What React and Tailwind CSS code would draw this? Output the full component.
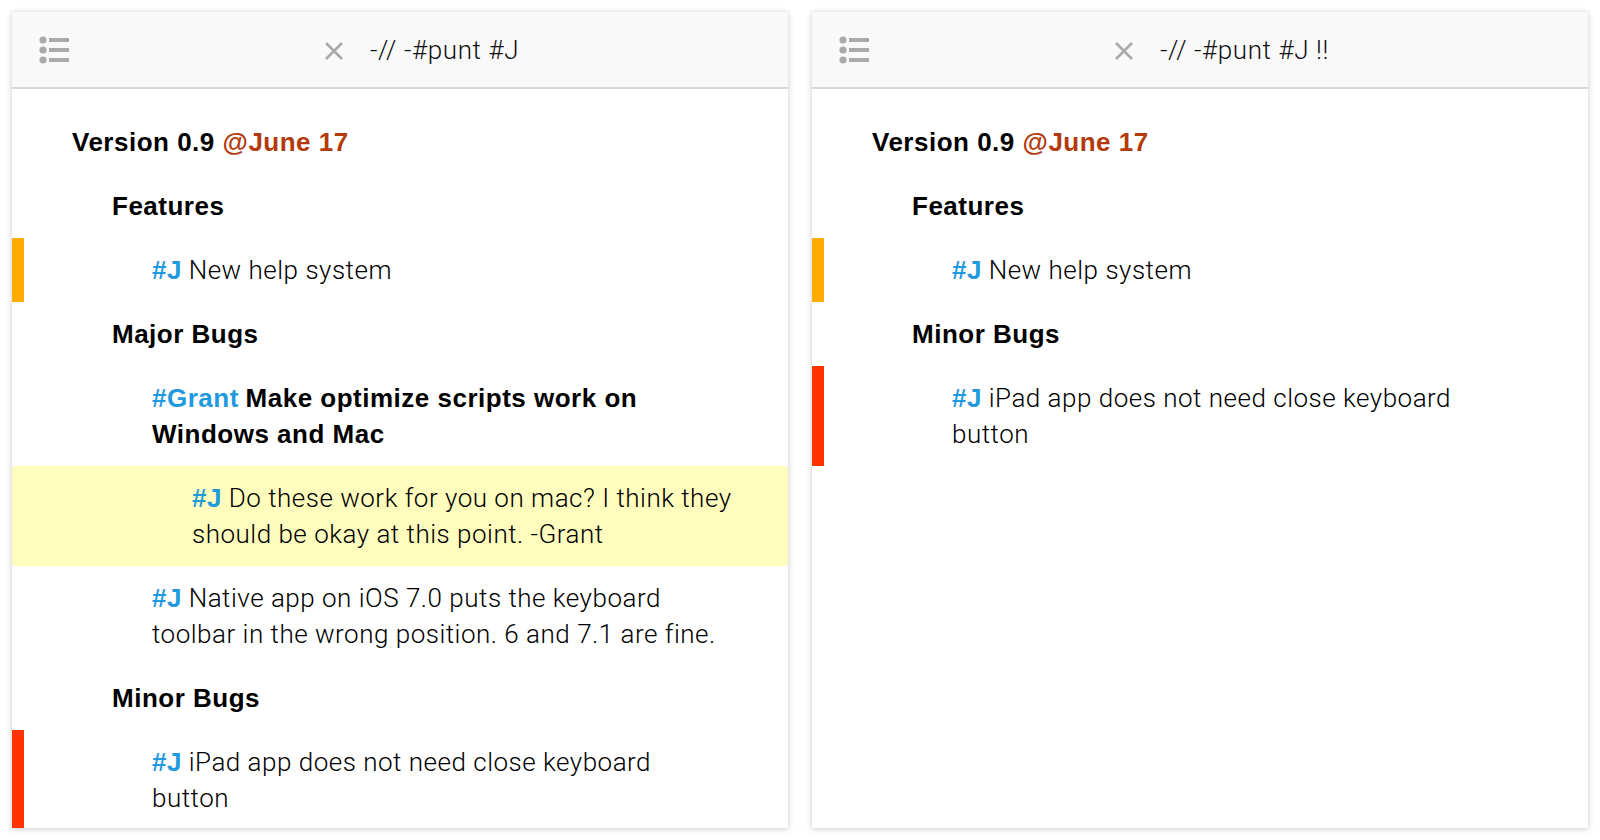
import React from "react";

const light = "font-['Roboto','Liberation_Sans',sans-serif] font-light tracking-[0.5px] align-top";
const bold = "font-['Liberation_Sans','Roboto',sans-serif] font-bold tracking-[0.5px] align-top";

function ListIcon() {
  return (
    <svg width="30" height="30" viewBox="0 0 30 30" className="shrink-0">
      <circle cx="4" cy="5" r="3.6" fill="#aaa" />
      <circle cx="4" cy="15" r="3.6" fill="#aaa" />
      <circle cx="4" cy="25" r="3.6" fill="#aaa" />
      <rect x="10" y="3" width="20" height="4" fill="#aaa" />
      <rect x="10" y="13" width="20" height="4" fill="#aaa" />
      <rect x="10" y="23" width="20" height="4" fill="#aaa" />
    </svg>
  );
}

function CloseIcon() {
  return (
    <svg width="20" height="20" viewBox="0 0 20 20" className="shrink-0">
      <path d="M2 2 L18 18 M18 2 L2 18" stroke="#aaa" strokeWidth="2.6" />
    </svg>
  );
}

const Tag = ({ children }) => (
  <span className={`${bold} text-[#1f9ade]`}>{children}</span>
);

function Row({ level, mark, highlight, children }) {
  const pads = ["pl-[60px]", "pl-[100px]", "pl-[140px]", "pl-[180px]"];
  return (
    <div
      className={`relative py-[14px] pr-[40px] ${pads[level]} ${
        highlight ? "bg-[#fffdbd]" : ""
      }`}
    >
      {mark && <div className={`absolute left-0 top-0 bottom-0 w-3 ${mark}`} />}
      {children}
    </div>
  );
}

function Panel({ title, children }) {
  return (
    <div className="w-[776px] h-[816px] bg-white shadow-[0_1px_6px_rgba(0,0,0,0.22)] flex flex-col overflow-hidden">
      <header className="h-[77px] shrink-0 bg-[#f9f9f9] border-b-2 border-[#d6d6d6] flex items-center pl-[27px] pr-[14px]">
        <ListIcon />
        <div className="flex-1 flex items-center justify-center gap-[26px] pt-[2px]">
          <CloseIcon />
          <span className="font-['Roboto','Liberation_Sans',sans-serif] font-light text-[26px] text-[#111] tracking-[0.6px]">
            {title}
          </span>
        </div>
      </header>
      <div className="pt-[21px] text-[26px] leading-[36px] text-black">{children}</div>
    </div>
  );
}

const Heading = ({ level, children }) => (
  <Row level={level}>
    <span className={bold}>{children}</span>
  </Row>
);

export default function App() {
  return (
    <div className="min-h-screen bg-white flex gap-6 p-3">
      <Panel title="-// -#punt #J">
        <Heading level={0}>
          Version 0.9 <span className="text-[#b33a0c]">@June 17</span>
        </Heading>
        <Heading level={1}>Features</Heading>
        <Row level={2} mark="bg-[#ffab00]">
          <Tag>#J</Tag> <span className={light}>New help system</span>
        </Row>
        <Heading level={1}>Major Bugs</Heading>
        <Row level={2}>
          <Tag>#Grant</Tag>{" "}
          <span className={bold}>
            Make optimize scripts work on
            <br />
            Windows and Mac
          </span>
        </Row>
        <Row level={3} highlight>
          <Tag>#J</Tag>{" "}
          <span className={light}>
            Do these work for you on mac? I think they
            <br />
            should be okay at this point. -Grant
          </span>
        </Row>
        <Row level={2}>
          <Tag>#J</Tag>{" "}
          <span className={light}>
            Native app on iOS 7.0 puts the keyboard
            <br />
            toolbar in the wrong position. 6 and 7.1 are fine.
          </span>
        </Row>
        <Heading level={1}>Minor Bugs</Heading>
        <Row level={2} mark="bg-[#ff3300]">
          <Tag>#J</Tag>{" "}
          <span className={light}>
            iPad app does not need close keyboard
            <br />
            button
          </span>
        </Row>
      </Panel>
      <Panel title="-// -#punt #J !!">
        <Heading level={0}>
          Version 0.9 <span className="text-[#b33a0c]">@June 17</span>
        </Heading>
        <Heading level={1}>Features</Heading>
        <Row level={2} mark="bg-[#ffab00]">
          <Tag>#J</Tag> <span className={light}>New help system</span>
        </Row>
        <Heading level={1}>Minor Bugs</Heading>
        <Row level={2} mark="bg-[#ff3300]">
          <Tag>#J</Tag>{" "}
          <span className={light}>
            iPad app does not need close keyboard
            <br />
            button
          </span>
        </Row>
      </Panel>
    </div>
  );
}
